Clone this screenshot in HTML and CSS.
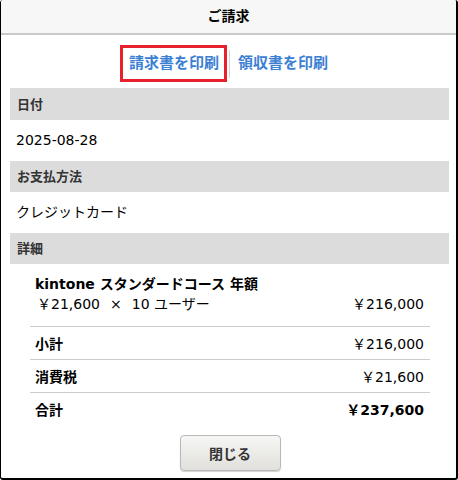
FILE: index.html
```html
<!DOCTYPE html>
<html lang="ja">
<head>
<meta charset="utf-8">
<link rel="stylesheet" href="styles.css">
</head>
<body>
<div class="dialog">
  <div class="dialog-header">ご請求</div>
  <div class="dialog-body">
    <div class="print-links">
      <a class="print-link print-link--active">請求書を印刷</a>
      <span class="print-sep"></span>
      <a class="print-link">領収書を印刷</a>
    </div>
    <div class="section-label">日付</div>
    <div class="section-value">2025-08-28</div>
    <div class="section-label">お支払方法</div>
    <div class="section-value">クレジットカード</div>
    <div class="section-label">詳細</div>
    <div class="details">
      <div class="item">
        <div class="item-name">kintone スタンダードコース 年額</div>
        <div class="item-line">
          <span>￥21,600<span class="times">×</span>10 ユーザー</span>
          <span>￥216,000</span>
        </div>
      </div>
      <div class="row"><span class="row-label">小計</span><span>￥216,000</span></div>
      <div class="row"><span class="row-label">消費税</span><span>￥21,600</span></div>
      <div class="row row--total"><span class="row-label">合計</span><span class="total-value">￥237,600</span></div>
    </div>
    <div class="actions">
      <button class="btn">閉じる</button>
    </div>
  </div>
</div>
</body>
</html>
```
FILE: styles.css
```css
html, body {
  margin: 0;
  padding: 0;
  background: #fff;
}
body {
  font-family: "DejaVu Sans", "Noto Sans CJK JP", sans-serif;
  color: #000;
}
.dialog {
  width: 458px;
  height: 480px;
  box-sizing: border-box;
  border-left: 1px solid #000;
  border-right: 2px solid #000;
  border-bottom: 2px solid #000;
  border-radius: 3px;
  overflow: hidden;
  background: #fff;
}
.dialog-header {
  height: 33px;
  line-height: 33px;
  background: #f7f7f7;
  border-bottom: 2px solid #c9c9c9;
  text-align: center;
  font-size: 14px;
  font-weight: bold;
}
.dialog-body {
  padding: 0 7px 0 9px;
}
.print-links {
  height: 49px;
  padding-top: 4px;
  border-bottom: 1px solid #dedede;
  display: flex;
  align-items: center;
  justify-content: center;
  padding-right: 6px;
}
.print-link {
  font-size: 15px;
  font-weight: bold;
  color: #3b80d3;
  padding: 5px 5px 6px 6px;
  border: 3px solid transparent;
  line-height: 20px;
}
.print-link--active {
  border-color: #e6212b;
}
.print-sep {
  width: 1px;
  height: 28px;
  background: #d4d4d4;
  margin: 0 1px 0 2px;
}
.print-links .print-link:last-child {
  border: none;
  padding-left: 7px;
}
.section-label {
  height: 31px;
  line-height: 32px;
  background: #dcdcdc;
  padding-left: 7px;
  font-size: 13px;
  font-weight: bold;
  color: #333;
}
.section-value {
  height: 41px;
  line-height: 40px;
  padding-left: 6px;
  font-size: 14px;
}
.details {
  margin: 0 19px 0 20px;
  font-size: 14px;
}
.item {
  padding: 10px 6px 12px 5px;
  border-bottom: 1px solid #cccccc;
}
.item-name {
  font-weight: bold;
  line-height: 20px;
}
.item-line {
  display: flex;
  justify-content: space-between;
  line-height: 20px;
  padding-left: 2px;
}
.times {
  margin: 0 10px;
}
.row {
  height: 32px;
  line-height: 34px;
  display: flex;
  justify-content: space-between;
  padding: 0 6px 0 5px;
  border-bottom: 1px solid #cccccc;
}
.row--total {
  border-bottom: none;
}
.row-label {
  font-weight: bold;
}
.total-value {
  font-weight: bold;
}
.actions {
  display: flex;
  justify-content: center;
  padding-top: 10px;
}
.btn {
  width: 101px;
  height: 36px;
  border: 1px solid #b8b8b8;
  border-radius: 4px;
  background: linear-gradient(#f6f6f4, #e1e0dc);
  box-shadow: 0 1px 1px rgba(0,0,0,0.18);
  font-family: "DejaVu Sans", "Noto Sans CJK JP", sans-serif;
  font-size: 14px;
  font-weight: bold;
  color: #333;
  margin-left: 1px;
}
```
